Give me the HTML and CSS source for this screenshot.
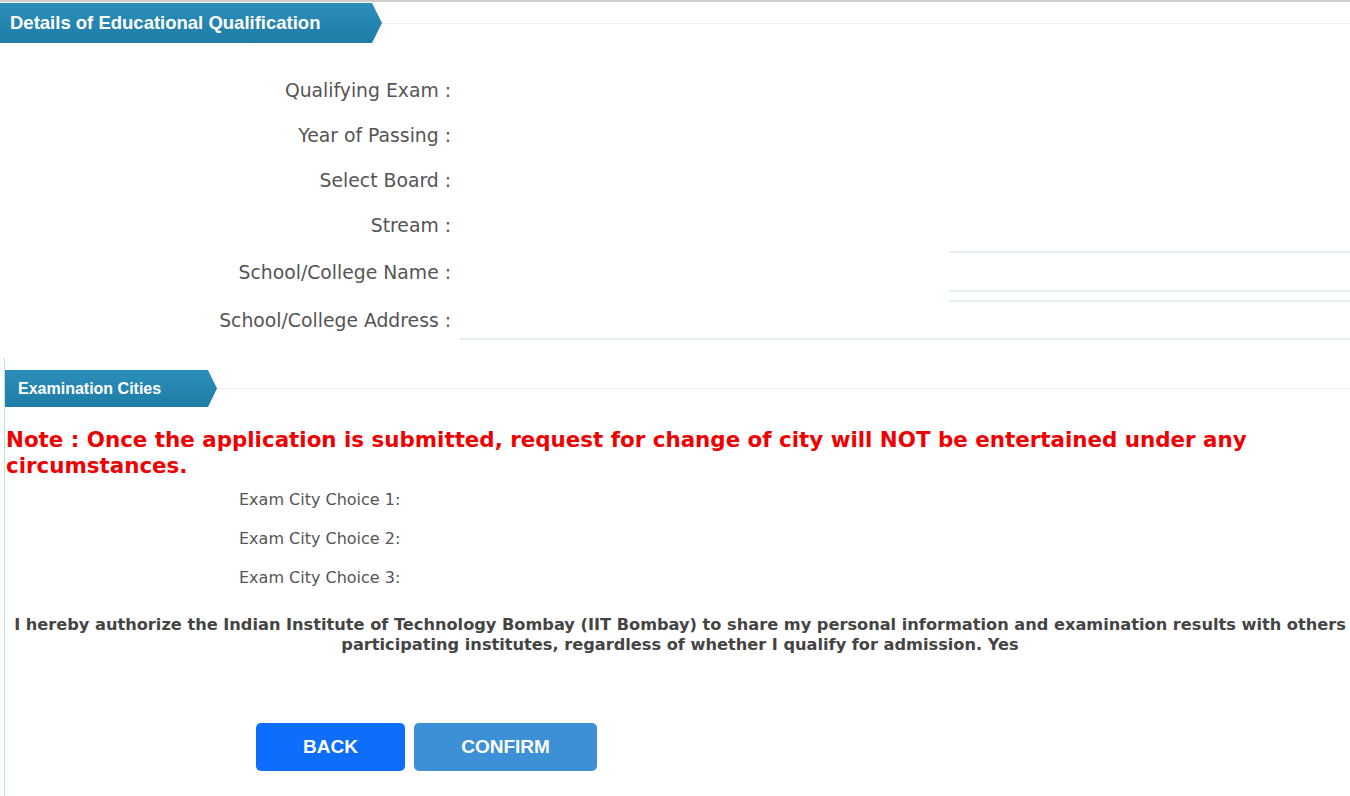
FILE: index.html
```html
<!DOCTYPE html>
<html>
<head>
<meta charset="utf-8">
<link rel="stylesheet" href="styles.css">
</head>
<body>
<div class="page">
  <div class="section-head head-edu">
    <div class="banner banner-edu">Details of Educational Qualification</div>
    <div class="head-line"></div>
  </div>

  <div class="edu-form">
    <div class="row r1"><div class="label">Qualifying Exam :</div><div class="value"></div></div>
    <div class="row r2"><div class="label">Year of Passing :</div><div class="value"></div></div>
    <div class="row r3"><div class="label">Select Board :</div><div class="value"></div></div>
    <div class="row r4"><div class="label">Stream :</div><div class="value"></div></div>
    <div class="row r5"><div class="label">School/College Name :</div><div class="value"><div class="line-a"></div><div class="line-b"></div></div></div>
    <div class="row r6"><div class="label">School/College Address :</div><div class="value value-addr"></div></div>
  </div>

  <div class="cities">
    <div class="section-head head-city">
      <div class="banner banner-city">Examination Cities</div>
      <div class="head-line"></div>
    </div>
    <p class="note">Note : Once the application is submitted, request for change of city will NOT be entertained under any circumstances.</p>
    <div class="city-list">
      <div class="city-row"><span class="city-label">Exam City Choice 1:</span></div>
      <div class="city-row"><span class="city-label">Exam City Choice 2:</span></div>
      <div class="city-row"><span class="city-label">Exam City Choice 3:</span></div>
    </div>
    <p class="consent">I hereby authorize the Indian Institute of Technology Bombay (IIT Bombay) to share my personal information and examination results with others<br>participating institutes, regardless of whether I qualify for admission. Yes</p>
    <div class="actions">
      <button class="btn btn-back">BACK</button>
      <button class="btn btn-confirm">CONFIRM</button>
    </div>
  </div>
</div>
</body>
</html>
```

FILE: styles.css
```css
html, body {
  margin: 0;
  padding: 0;
  background: #ffffff;
  overflow: hidden;
}
body {
  width: 1350px;
  height: 796px;
  font-family: "DejaVu Sans", "Noto Sans", sans-serif;
  color: #555;
}
.page {
  border-top: 2px solid #cfcfcf;
  height: 794px;
  overflow: hidden;
}
.section-head {
  display: flex;
  align-items: center;
}
.head-edu {
  padding-top: 1px;
}
.banner {
  color: #fff;
  font-family: "Liberation Sans", Arial, sans-serif;
  font-weight: bold;
  background: linear-gradient(#2b8fba, #1f7ca6);
  display: flex;
  align-items: center;
  flex: none;
  box-sizing: border-box;
}
.banner-edu {
  width: 382px;
  height: 40px;
  padding-left: 10px;
  font-size: 18.5px;
  clip-path: polygon(0 0, 372px 0, 382px 50%, 372px 100%, 0 100%);
}
.head-line {
  flex: 1;
  height: 1px;
  background: #eef0f2;
}
.edu-form {
  padding-top: 25px;
}
.row {
  display: flex;
  align-items: center;
}
.label {
  width: 451px;
  flex: none;
  text-align: right;
  font-size: 18.8px;
  color: #555;
}
.value {
  flex: 1;
  align-self: stretch;
}
.r1, .r2, .r3, .r4 { height: 45px; }
.r5, .r6 { height: 48px; }
.line-a {
  margin-left: 498px;
  margin-top: 3px;
  border-top: 2px solid #e3edf4;
}
.line-b {
  margin-left: 498px;
  margin-top: 37px;
  height: 8px;
  border-top: 2px solid #e3edf4;
  border-bottom: 2px solid #e3edf4;
}
.value-addr {
  margin-left: 9px;
  margin-bottom: 4px;
  border-bottom: 2px solid #e3edf4;
}
.cities {
  margin-top: 14px;
  margin-left: 4px;
  border-left: 1px solid #bfe6cc;
  padding-top: 12px;
  min-height: 500px;
}
.banner-city {
  width: 212px;
  height: 37px;
  padding-left: 13px;
  font-size: 16px;
  clip-path: polygon(0 0, 203px 0, 212px 50%, 203px 100%, 0 100%);
}
.note {
  margin: 20px 0 0 1px;
  color: #f00000;
  font-weight: bold;
  font-size: 21.4px;
  line-height: 26px;
}
.city-list {
  padding-left: 234px;
  padding-top: 11px;
}
.city-row {
  font-size: 16px;
  height: 39px;
  line-height: 20px;
  color: #555;
}
.city-label {
  display: inline-block;
  width: 161px;
  overflow: hidden;
  white-space: nowrap;
  vertical-align: top;
}
.consent {
  margin: 8px 0 0 0;
  width: 1350px;
  text-align: center;
  white-space: nowrap;
  font-weight: bold;
  font-size: 16.2px;
  line-height: 20px;
  color: #444;
}
.actions {
  display: flex;
  gap: 9px;
  padding-left: 251px;
  margin-top: 68px;
}
.btn {
  border: none;
  color: #fff;
  font-family: "Liberation Sans", Arial, sans-serif;
  font-weight: bold;
  font-size: 19px;
  height: 48px;
  border-radius: 5px;
}
.btn-back {
  width: 149px;
  background: #0d6efd;
}
.btn-confirm {
  width: 183px;
  background: #3d8fd6;
}
```
